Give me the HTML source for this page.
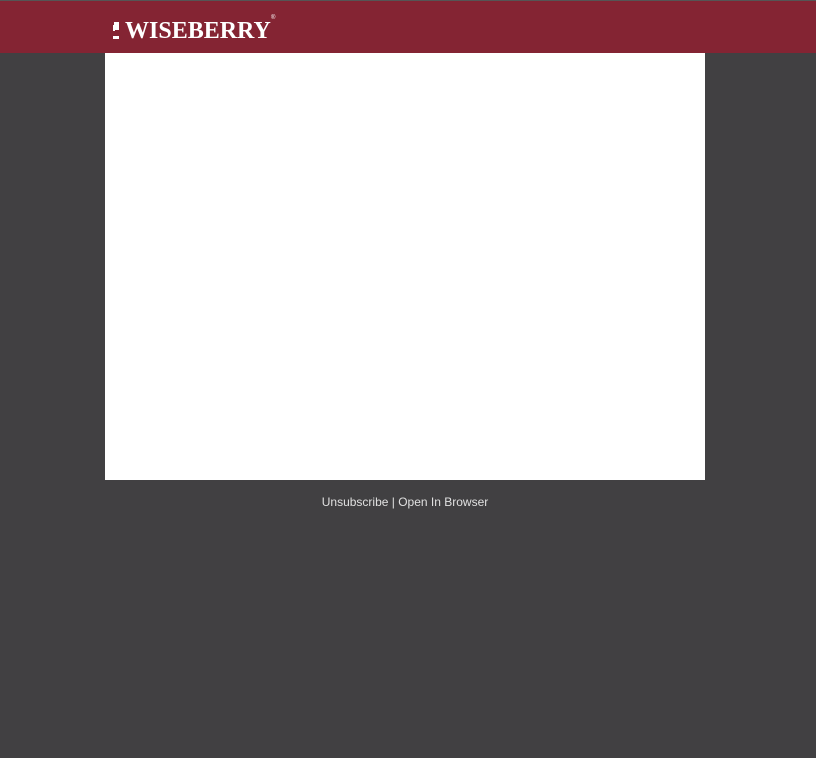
<!DOCTYPE html>
<html><head><meta charset="utf-8"><style>
html,body{margin:0;padding:0;width:816px;height:758px;background:#414042;overflow:hidden;font-family:"Liberation Sans",sans-serif}
.top{position:absolute;left:0;top:0;width:816px;height:1px;background:#555}
.hdr{position:absolute;left:0;top:1px;width:816px;height:52px;background:#842433}
.logo{position:absolute;left:125px;top:14px;color:#fff;font-family:"Liberation Serif",serif;font-weight:bold;font-size:24px;letter-spacing:0;line-height:34px}
.reg{position:absolute;left:271px;top:15px;color:#fff;font-size:6px;font-family:"Liberation Sans",sans-serif}
.ic{position:absolute;left:113px;top:22px;width:6px;height:18px}
.ic i{position:absolute;background:#fff}
.box{position:absolute;left:105px;top:53px;width:600px;height:427px;background:#fff}
.ft{position:absolute;left:0;width:810px;top:495px;text-align:center;color:#e0e0e0;font-size:12px}
</style></head><body>
<div class="top"></div>
<div class="hdr"></div>
<div class="ic"><i style="left:1px;top:0;width:5px;height:8px"></i><i style="left:0;top:3px;width:2px;height:6px"></i><i style="left:0;top:14px;width:6px;height:3px"></i></div>
<div class="logo">WISEBERRY</div>
<div class="reg">®</div>
<div class="box"></div>
<div class="ft">Unsubscribe | Open In Browser</div>
</body></html>
